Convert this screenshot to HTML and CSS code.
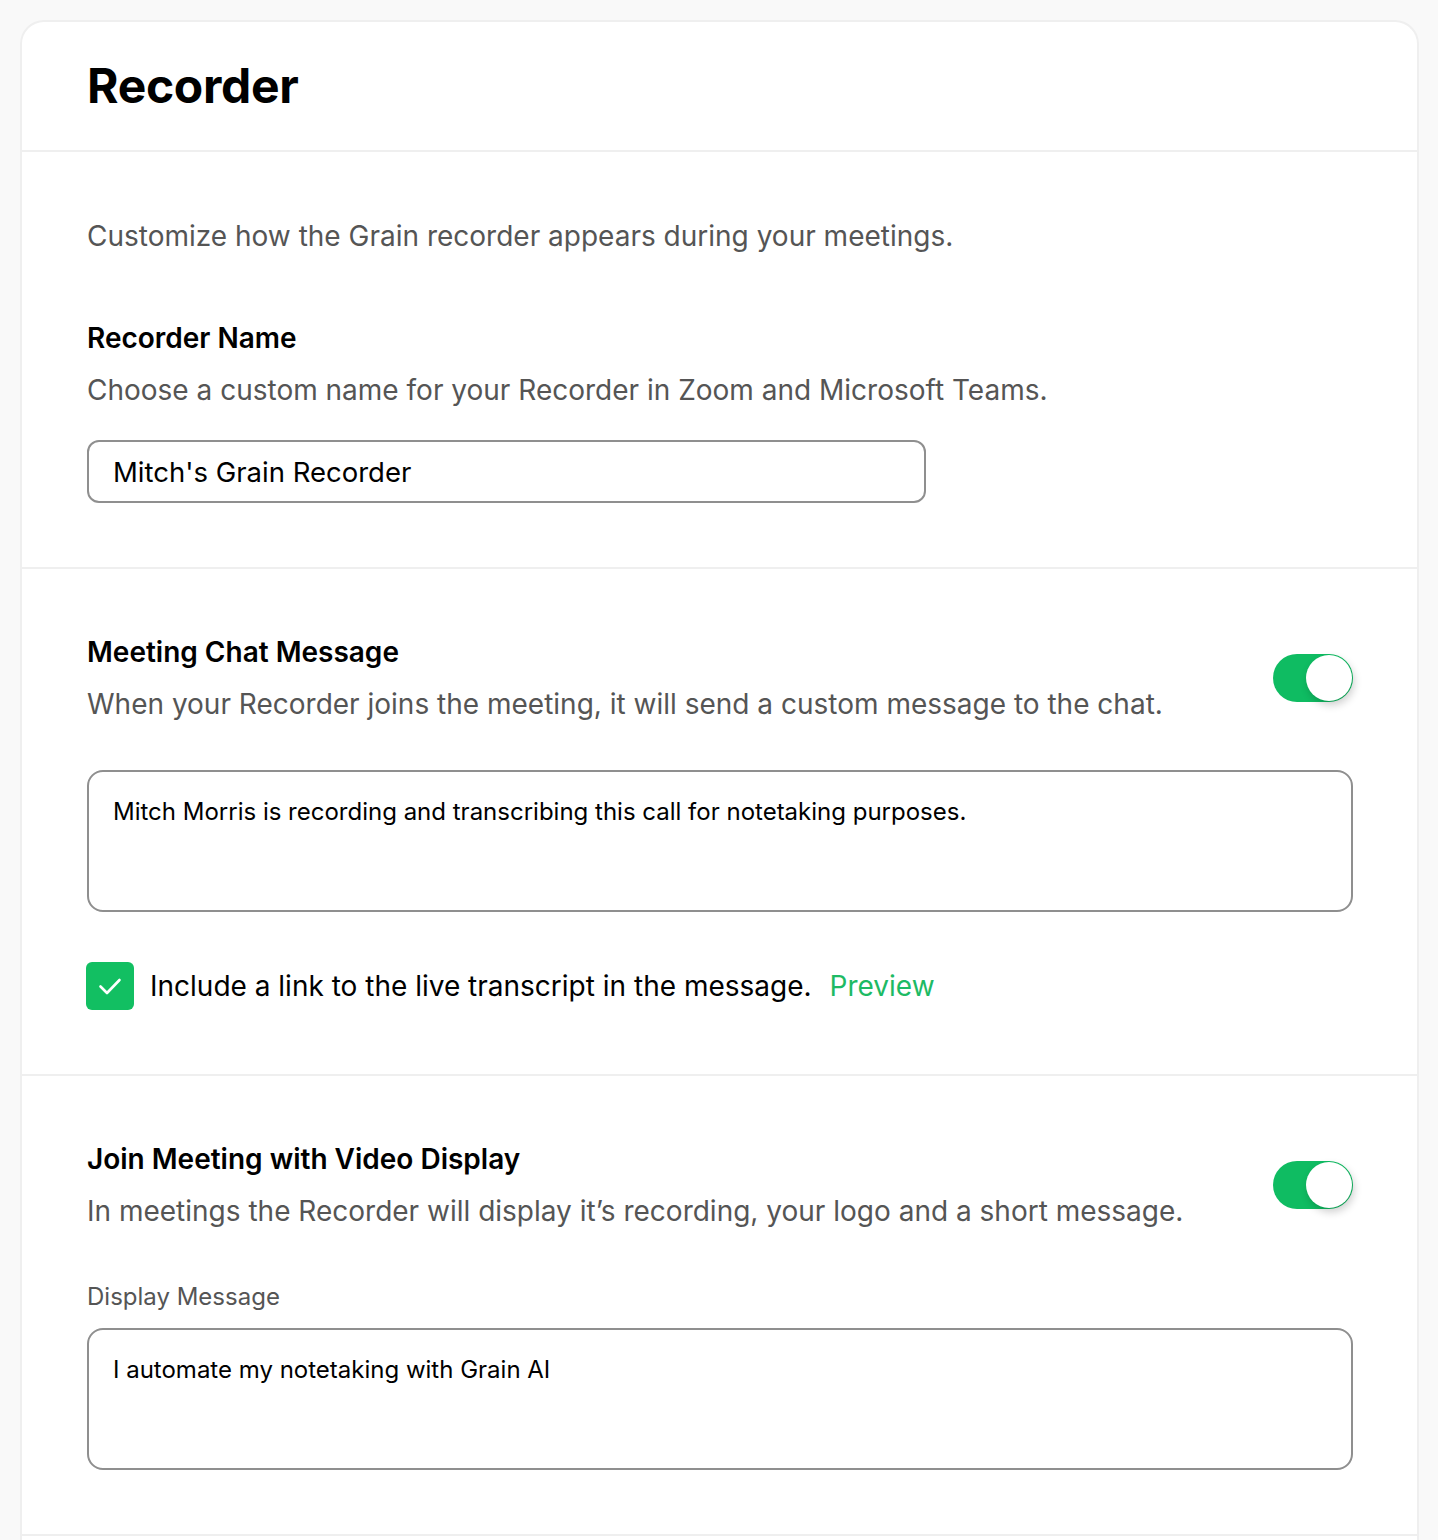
FILE: index.html
```html
<!DOCTYPE html>
<html>
<head>
	<title>Recorder</title>
	<link rel="stylesheet" href="styles.css">
</head>
<body>
	<div class="card">
		<div class="card-header">
			<h1 class="title">Recorder</h1>
		</div>

		<div class="section">
			<p class="intro">Customize how the Grain recorder appears during your meetings.</p>
			<h2 class="heading">Recorder Name</h2>
			<p class="desc">Choose a custom name for your Recorder in Zoom and Microsoft Teams.</p>
			<div class="field name-field">Mitch's Grain Recorder</div>
		</div>

		<div class="section">
			<div class="row">
				<div class="row-text">
					<h2 class="heading">Meeting Chat Message</h2>
					<p class="desc">When your Recorder joins the meeting, it will send a custom message to the chat.</p>
				</div>
				<div class="toggle"><span class="knob"></span></div>
			</div>
			<div class="field area chat-area">Mitch Morris is recording and transcribing this call for notetaking purposes.</div>
			<div class="check-row">
				<span class="checkbox">
					<svg width="28" height="28" viewBox="0 0 28 28"><path d="M4.5 14.5 L11 21 L23.5 8" fill="none" stroke="#fff" stroke-width="2.6" stroke-linecap="round" stroke-linejoin="round"/></svg>
				</span>
				<span class="check-label">Include a link to the live transcript in the message.</span>
				<a class="preview">Preview</a>
			</div>
		</div>

		<div class="section">
			<div class="row">
				<div class="row-text">
					<h2 class="heading">Join Meeting with Video Display</h2>
					<p class="desc">In meetings the Recorder will display it’s recording, your logo and a short message.</p>
				</div>
				<div class="toggle"><span class="knob"></span></div>
			</div>
			<div class="small-label">Display Message</div>
			<div class="field area">I automate my notetaking with Grain AI</div>
		</div>
	</div>
</body>
</html>
```

FILE: styles.css
```css
* {
	box-sizing: border-box;
}
body {
	margin: 0;
	padding: 20px 19px 0 20px;
	background-color: #f9f9f9;
	font-family: Inter, "Noto Sans", sans-serif;
	color: #000;
}
.card {
	background-color: #fff;
	border: solid #efefef 2px;
	border-bottom: none;
	border-radius: 24px 24px 0 0;
	height: 1540px;
}
.card-header {
	height: 128px;
	padding: 0 65px;
	display: flex;
	align-items: center;
	border-bottom: solid #efefef 2px;
	box-sizing: content-box;
}
.title {
	margin: 0;
	font-size: 48px;
	line-height: 58px;
	font-weight: 700;
	letter-spacing: -0.3px;
}
.section {
	padding: 65px 64px 64px 65px;
	border-bottom: solid #efefef 2px;
}
.intro {
	margin: 1px 0 66px;
	font-size: 28px;
	line-height: 36px;
	color: #555;
}
.heading {
	margin: 0;
	font-size: 28px;
	line-height: 36px;
	font-weight: 600;
}
.desc {
	margin: 16px 0 0;
	font-size: 28px;
	line-height: 36px;
	color: #555;
}
.field {
	border: solid #8f8f8f 2px;
	border-radius: 12px;
	font-size: 27.5px;
	color: #000;
}
.name-field {
	width: 839px;
	height: 63px;
	margin-top: 32px;
	padding: 0 24px;
	display: flex;
	align-items: center;
}
.area {
	height: 142px;
	border-radius: 16px;
	padding: 25px 24px;
	font-size: 24px;
	line-height: 30px;
}
.chat-area {
	margin-top: 48px;
}
.row {
	display: flex;
	align-items: center;
	justify-content: space-between;
}
.toggle {
	width: 80px;
	height: 48px;
	border-radius: 24px;
	background-color: #0fbc62;
	position: relative;
	flex-shrink: 0;
}
.knob {
	position: absolute;
	right: 1px;
	top: 1px;
	width: 46px;
	height: 46px;
	border-radius: 50%;
	background-color: #fff;
	box-shadow: 2px 4px 8px rgba(0, 0, 0, 0.2);
}
.check-row {
	margin-top: 50px;
	display: flex;
	align-items: center;
	height: 48px;
}
.checkbox {
	width: 48px;
	height: 48px;
	border-radius: 6px;
	background-color: #12bf62;
	display: flex;
	align-items: center;
	justify-content: center;
	margin-left: -1px;
}
.check-label {
	margin-left: 16px;
	font-size: 28px;
}
.preview {
	margin-left: 18px;
	font-size: 28px;
	color: #1dba64;
}
.small-label {
	margin-top: 53px;
	font-size: 24px;
	line-height: 30px;
	color: #555;
}
.small-label + .field {
	margin-top: 16px;
}
```
